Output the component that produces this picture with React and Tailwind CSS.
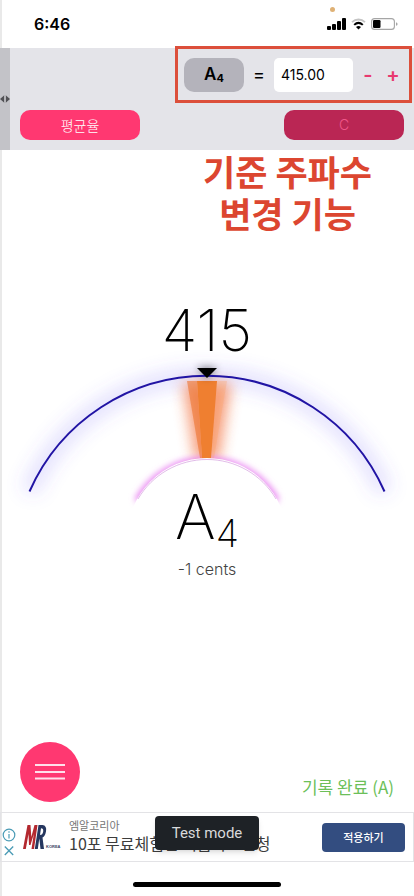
import React from "react";

function StatusBar() {
  return (
    <header className="relative flex h-12 items-center justify-between pl-[34px] pr-4">
      <span className="font-['Inter','Liberation_Sans',sans-serif] text-base font-semibold text-black">6:46</span>
      <span className="absolute right-[79px] top-[7px] size-[5px] rounded-full bg-[#dfb175]" />
      <div className="flex items-center gap-[5px]">
        <svg width="19" height="12" viewBox="0 0 19 12" aria-label="Signal">
          <rect x="0" y="8" width="4" height="4" rx="1" />
          <rect x="5" y="6" width="4" height="6" rx="1" />
          <rect x="10" y="3" width="4" height="9" rx="1" />
          <rect x="15" y="0" width="4" height="12" rx="1" />
        </svg>
        <svg width="15" height="12" viewBox="0 0 15 12" fill="none" aria-label="Wi-Fi">
          <path d="M1 4.2C4.8.6 10.2.6 14 4.2" stroke="#c4c4c4" strokeWidth="1.8" />
          <path d="M3.2 6.9C5.8 4.4 9.2 4.4 11.8 6.9" stroke="#000" strokeWidth="2" />
          <path d="M7.5 11.6 5 9.1Q7.5 7.1 10 9.1Z" fill="#000" />
        </svg>
        <svg width="27" height="12" viewBox="0 0 27 12" fill="none" aria-label="Battery">
          <rect x=".6" y=".6" width="22.8" height="10.8" rx="3" stroke="#a5a5a5" strokeWidth="1.1" />
          <rect x="2" y="2" width="7.5" height="8" rx="1.2" fill="#000" />
          <path d="M25 4.2Q26.6 4.6 26.6 6T25 7.8Z" fill="#a5a5a5" />
        </svg>
      </div>
    </header>
  );
}

function Toolbar() {
  return (
    <section className="flex h-[102px] bg-[#e4e4e9]">
      <div className="flex w-2.5 items-center justify-center bg-[#c3c3c8]">
        <svg width="10" height="8" viewBox="0 0 10 8" fill="#505054" aria-hidden="true">
          <path d="M0 4 4 0.6V7.4ZM10 4 6 .6V7.4Z" />
          <path d="M4.7 0h.6v8h-.6z" fill="#8d8d92" />
        </svg>
      </div>
      <div className="flex flex-1 flex-col">
        <div className="-mt-0.5 mr-0.5 flex h-[57px] items-center self-end border-3 border-[#dc4f3b] px-1.5 font-['Inter','Liberation_Sans',sans-serif]">
          <button className="h-[34px] w-[60px] rounded-[10px] bg-[#b4b3bb] text-[17px] font-semibold text-black">
            A<sub className="bottom-[-2px] text-[11px] font-bold">4</sub>
          </button>
          <label htmlFor="freq" className="w-[30px] text-center text-lg text-black">=</label>
          <input id="freq" defaultValue="415.00" className="h-[34px] w-[79px] rounded-[5px] bg-white px-[7px] text-sm text-black" />
          <button className="w-[30px] text-center text-xl font-semibold text-[#e83a70]" aria-label="Decrease">-</button>
          <button className="w-5 text-center text-xl font-semibold text-[#e83a70]" aria-label="Increase">+</button>
        </div>
        <div className="mt-[7px] flex justify-between px-2.5">
          <button className="h-[30px] w-[120px] rounded-[10px] bg-[#ff3871] text-sm font-light text-white">평균율</button>
          <button className="h-[30px] w-[120px] rounded-[10px] bg-[#ba2654] font-['Inter','Liberation_Sans',sans-serif] text-sm font-light text-[#f0578a]">C</button>
        </div>
      </div>
    </section>
  );
}

function Gauge() {
  return (
    <svg viewBox="0 0 414 170" className="-mt-3 w-full" role="img" aria-label="Tuning gauge">
      <defs>
        <filter id="blueGlow" x="-20%" y="-40%" width="140%" height="180%">
          <feGaussianBlur stdDeviation="9" />
        </filter>
        <filter id="orangeGlow" x="-100%" y="-30%" width="300%" height="160%">
          <feGaussianBlur stdDeviation="7" />
        </filter>
        <filter id="pinkGlow" x="-20%" y="-40%" width="140%" height="180%">
          <feGaussianBlur stdDeviation="3" />
        </filter>
        <filter id="darkGlow" x="-60%" y="-100%" width="220%" height="300%">
          <feGaussianBlur stdDeviation="4" />
        </filter>
        <clipPath id="outsideInner">
          <path clipRule="evenodd" d="M0 0H414V170H0ZM127 188a80 80 0 0 1 160 0Z" />
        </clipPath>
      </defs>
      <path d="M29.5 141.5A194 194 0 0 1 384.5 141.5" fill="none" stroke="#6a5cf5" strokeOpacity=".2" strokeWidth="16" filter="url(#blueGlow)" />
      <g clipPath="url(#outsideInner)">
        <path d="M183 33H231L219 110H195Z" fill="#f26a35" opacity=".65" filter="url(#orangeGlow)" />
        <path d="M137 151A80 80 0 0 1 277 151" fill="none" stroke="#e77cf0" strokeWidth="6" filter="url(#pinkGlow)" />
      </g>
      <path d="M187 31H197L202 108H200Z" fill="#ed7431" opacity=".6" />
      <path d="M217 31H227L214 108H211Z" fill="#fba366" opacity=".3" />
      <path d="M197 31H217L211 108H202Z" fill="#ef7f30" />
      <path d="M138 149A80 80 0 0 1 276 149" fill="none" stroke="#c47ad2" strokeOpacity=".5" strokeWidth="1" />
      <path d="M197 18H217L207 28Z" fill="#000" opacity=".6" filter="url(#darkGlow)" />
      <path d="M29.5 141.5A194 194 0 0 1 384.5 141.5" fill="none" stroke="#2114a4" strokeWidth="2" />
      <path d="M197 18H217L207 28Z" fill="#000" />
    </svg>
  );
}

function AdBanner() {
  return (
    <aside className="relative mt-2.5 flex h-[50px] items-center border border-[#e3e3e6]">
      <div className="mt-3 flex w-4 flex-col items-center gap-0.5">
        <a href="#about" aria-label="About this ad">
          <svg width="14" height="14" viewBox="0 0 14 14" fill="none" stroke="#4a9bb5" strokeWidth="1.2">
            <circle cx="7" cy="7" r="5.8" />
            <path d="M7 6v4.5M7 3.3v1.4" />
          </svg>
        </a>
        <button aria-label="Close ad">
          <svg width="10" height="14" viewBox="0 0 10 14" stroke="#4a9bb5" strokeWidth="1.3">
            <path d="M.8 2.5 9.2 11M9.2 2.5.8 11" />
          </svg>
        </button>
      </div>
      <svg className="ml-1.5 shrink-0" width="40" height="30" viewBox="0 0 40 30" role="img" aria-label="MR Korea">
        <path d="M0 27 4.500 3H7.500L8.300 15 11.500 3H14.500L11 27H8.500L10.800 12 7.500 23H6L5.500 12 2.800 27Z" fill="#b3282f" />
        <path fillRule="evenodd" d="M11.800 27 15.500 3H19.500Q24 3.500 23 9.500 22 14.500 19.500 15.500L21 27H17.500L16.300 16.500 14.800 27ZM17 13Q19.600 13 20.200 9.500 20.600 6.200 18 6.200Z" fill="#26375f" />
        <text x="23" y="26" fontSize="4" fontWeight="700" fill="#3b4665" fontFamily="Liberation Sans">KOREA</text>
      </svg>
      <div className="mb-1 ml-1.5 min-w-0 flex-1 whitespace-nowrap">
        <p className="text-[11px] leading-[15px] text-[#757575]">엠알코리아</p>
        <p className="text-base leading-5 text-[#3c3c3c]">10포 무료체험단 지금바로신청</p>
      </div>
      <a href="#apply" className="mr-2 flex h-[29px] w-[83px] items-center justify-center rounded-[4px] bg-[#334d80] text-[11px] font-medium text-white">적용하기</a>
      <div role="status" className="absolute left-1/2 top-[3px] flex h-[34px] w-[104px] -translate-x-1/2 items-center justify-center rounded-[4px] bg-[#1e2226] font-['Roboto','Liberation_Sans',sans-serif] text-[15px] text-[#d9dadb] shadow-md">
        Test mode
      </div>
    </aside>
  );
}

export default function App() {
  return (
    <div className="flex min-h-screen flex-col bg-[linear-gradient(to_right,#e9e9e9_2px,#fff_2px)] font-['Noto_Sans_CJK_KR',sans-serif]">
      <StatusBar />
      <Toolbar />
      <h1 className="self-end pr-[42px] text-center text-[35px] font-bold leading-[42px] text-[#dc4630]">
        기준 주파수<br />변경 기능
      </h1>
      <main className="mt-[66px] flex flex-col items-center font-['Inter','Liberation_Sans',sans-serif] text-black">
        <p className="mb-0.5 text-[58px] font-extralight leading-[60px]">415</p>
        <Gauge />
        <div className="-mt-[34px] text-[62px] font-extralight leading-[62px]">
          A<sub className="bottom-[-8px] text-[38px]">4</sub>
        </div>
        <p className="mt-[11px] text-base font-light leading-5 text-[#444]">-1 cents</p>
      </main>
      <div className="mt-auto flex items-end justify-between px-5">
        <button aria-label="Menu" className="flex size-[60px] items-center justify-center rounded-full bg-[#ff3871]">
          <svg width="30" height="18" viewBox="0 0 30 18" stroke="#ffe0ea" strokeWidth="2">
            <path d="M0 2H30M0 9H30M0 15.500H30" />
          </svg>
        </button>
        <p className="mb-[3px] text-[17px] leading-6 text-[#6cbf59]">기록 완료 (A)</p>
      </div>
      <AdBanner />
      <footer className="flex h-[34px] items-end justify-center pb-[9px]">
        <div className="h-[5px] w-[148px] rounded-full bg-black" />
      </footer>
    </div>
  );
}
